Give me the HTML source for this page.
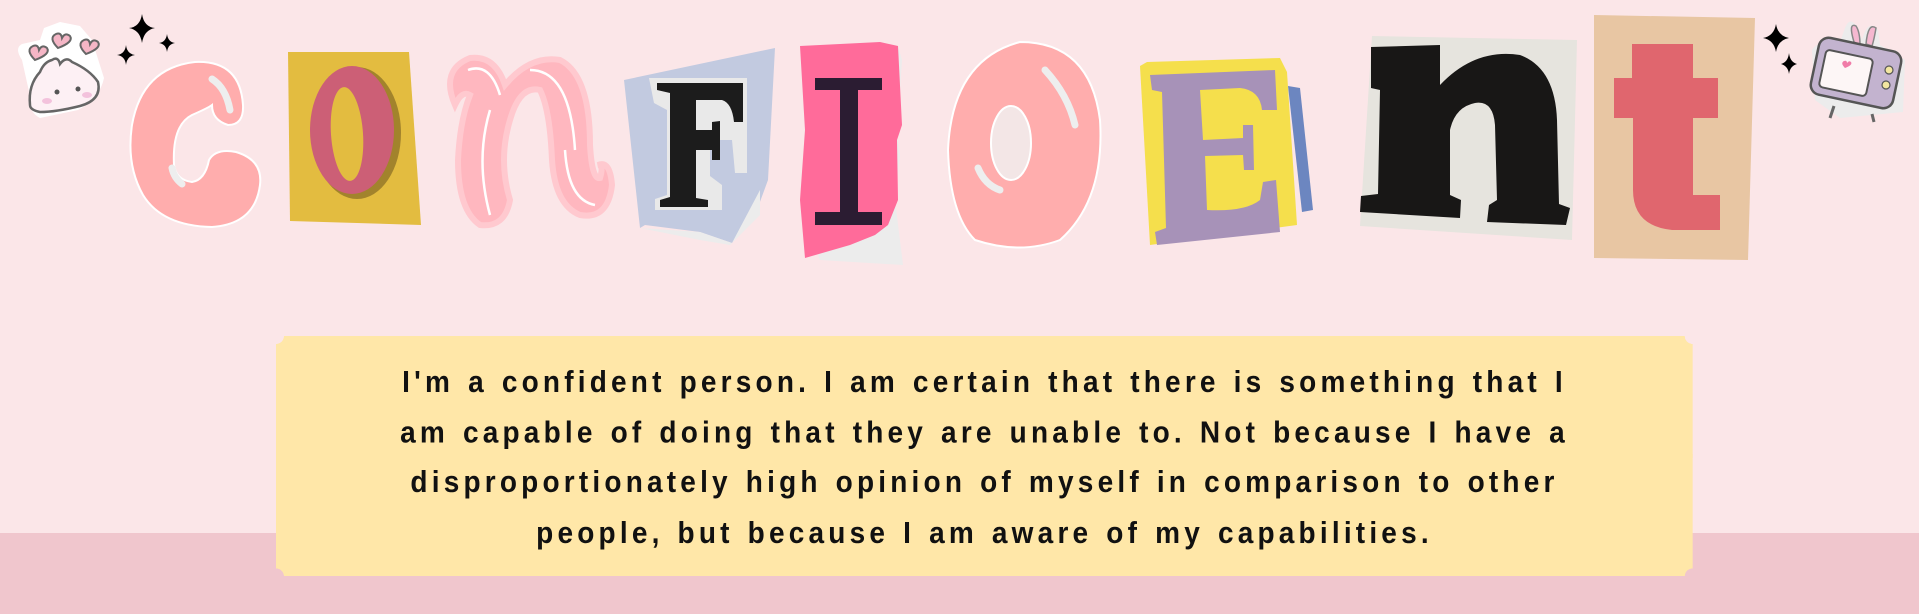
<!DOCTYPE html>
<html><head><meta charset="utf-8"><style>
html,body{margin:0;padding:0}
body{width:1919px;height:614px;background:#fbe6e8;position:relative;overflow:hidden;font-family:"Liberation Sans",sans-serif}
.band{position:absolute;left:0;top:533px;width:1919px;height:81px;background:#f0c6cd}
.box{position:absolute;left:276px;top:336px;width:1417px;height:240px;background:#ffe7a8;
-webkit-mask:radial-gradient(circle 8px at 0 0,transparent 98%,#000) top left/51% 51% no-repeat,radial-gradient(circle 8px at 100% 0,transparent 98%,#000) top right/51% 51% no-repeat,radial-gradient(circle 8px at 0 100%,transparent 98%,#000) bottom left/51% 51% no-repeat,radial-gradient(circle 8px at 100% 100%,transparent 98%,#000) bottom right/51% 51% no-repeat}
.txt{position:absolute;left:276px;top:366px;width:1417px;text-align:center;font-size:28px;line-height:45.5px;color:#111;letter-spacing:4.2px;word-spacing:2px;font-family:"Liberation Sans Narrow","Liberation Sans",sans-serif;font-weight:bold;transform:scaleY(1.1)}
svg{position:absolute;left:0;top:0}
</style></head><body>
<div class="band"></div>
<div class="box"></div>
<div class="txt">I'm a confident person. I am certain that there is something that I<br>am capable of doing that they are unable to. Not because I have a<br>disproportionately high opinion of myself in comparison to other<br>people, but because I am aware of my capabilities.</div>
<svg width="1919" height="300" viewBox="0 0 1919 300">
<g>
<path d="M22 60 Q14 48 22 44 L40 40 L44 28 L60 22 L80 26 L92 40 L104 78 Q100 98 78 110 L40 118 Q28 112 30 96 Z" fill="#fff"/>
<path d="M30 105 Q28 85 40 72 Q44 62 52 60 Q58 56 60 64 Q66 56 72 62 Q90 70 98 82 Q102 100 80 106 Q56 112 40 112 Q30 110 30 105Z" fill="#fdf0f4" stroke="#666" stroke-width="2.5"/>
<circle cx="57" cy="92" r="2.5" fill="#555"/><circle cx="78" cy="89" r="2.5" fill="#555"/>
<ellipse cx="47" cy="101" rx="5" ry="3" fill="#f3c2dc"/><ellipse cx="87" cy="95" rx="5" ry="3" fill="#f3c2dc"/>
<path d="M35 60 q-10 -10 -2 -14 q5 -2 6 4 q3 -6 8 -2 q4 6 -12 12z" fill="#f5b6c6" stroke="#666" stroke-width="2"/>
<path d="M58 48 q-10 -10 -2 -14 q5 -2 6 4 q3 -6 8 -2 q4 6 -12 12z" fill="#f5b6c6" stroke="#666" stroke-width="2"/>
<path d="M86 54 q-10 -10 -2 -14 q5 -2 6 4 q3 -6 8 -2 q4 6 -12 12z" fill="#f5b6c6" stroke="#666" stroke-width="2"/>
</g>
<g fill="#000">
<path d="M142 14 Q144 27 155 28 Q144 30 142 43 Q140 30 129 28 Q140 27 142 14Z"/>
<path d="M167 34 Q168 42 175 43 Q168 44 167 52 Q166 44 159 43 Q166 42 167 34Z"/>
<path d="M126 45 Q127 54 135 55 Q127 56 126 65 Q125 56 117 55 Q125 54 126 45Z"/>
<path d="M1776 24 Q1778 36 1789 38 Q1778 40 1776 52 Q1774 40 1763 38 Q1774 36 1776 24Z"/>
<path d="M1789 53 Q1790 62 1797 64 Q1790 66 1789 74 Q1788 66 1781 64 Q1788 62 1789 53Z"/>
</g>
<path d="M195 62 Q240 60 243 105 Q244 125 228 125 Q212 120 212 105 Q208 108 192 115 Q172 125 174 165 Q176 180 192 182 Q205 180 209 160 Q216 148 236 152 Q263 160 260 185 Q255 224 212 227 Q162 226 143 195 Q126 165 132 125 Q142 68 195 62Z" fill="#ffadad" stroke="#fff" stroke-width="2"/>
<path d="M212 79 Q226 88 230 110" stroke="#eee" stroke-width="7" fill="none" stroke-linecap="round"/>
<path d="M172 168 Q174 178 182 184" stroke="#eee" stroke-width="7" fill="none" stroke-linecap="round"/>
<polygon points="288,52 409,52 421,225 290,221" fill="#e3bc40"/>
<ellipse cx="357" cy="133" rx="44" ry="66" fill="#a2832c"/>
<ellipse cx="352" cy="130" rx="42" ry="64" fill="#cc5f76"/>
<ellipse cx="347" cy="134" rx="16" ry="47" fill="#e3bc40" transform="rotate(-4 347 134)"/>
<path d="M455 105 Q440 70 470 58 Q495 55 505 85 Q530 55 560 60 Q590 75 590 145 Q592 180 600 178 Q604 165 598 165 Q610 160 612 185 Q608 220 580 215 Q555 205 552 160 Q550 110 540 90 Q520 85 510 120 Q498 160 510 200 Q505 228 480 225 Q458 210 458 160 Q460 120 470 95 Q462 90 455 105Z" fill="#ffb7bf" stroke="#ffc9cf" stroke-width="6"/>
<path d="M468 70 Q490 62 500 95 M530 70 Q570 70 575 150 M490 110 Q475 160 490 215 M565 150 Q568 200 595 205" stroke="#fff" stroke-width="2.5" fill="none"/>
<polygon points="624,80 775,48 768,180 757,210 732,243 700,232 645,225 640,228" fill="#c2cae0"/>
<polygon points="640,228 700,232 732,243 760,190 760,215 730,245 700,240" fill="#ececec"/>
<path d="M649 78 H747 V173 H735 L732 140 H710 V176 L722 185 V210 H655 V199 L667 195 V110 L654 103Z" fill="#e9e9e9"/>
<path d="M657 83 H743 V122 H734 Q732 103 722 100 H696 V130 H712 V122 L720 121 V160 H712 V150 H696 V198 L708 200 V207 H660 V200 L670 197 V93 L657 90Z" fill="#1c1c1c"/>
<polygon points="800,46 880,42 898,46 902,60 897,135 900,155 895,200 903,265 820,260 800,200 805,130" fill="#ececec"/>
<polygon points="800,46 880,42 898,46 902,125 897,140 898,200 888,225 875,235 850,245 805,258 800,200 805,130" fill="#ff6b9a"/>
<path d="M815 78 H882 V90 H858 V212 H882 V225 H815 V212 H840 V90 H815Z" fill="#2b1c32"/>
<path d="M1020 42 Q1090 42 1100 120 Q1105 200 1060 240 Q1020 255 975 240 Q950 215 948 150 Q952 60 1020 42Z" fill="#ffadad" stroke="#fff" stroke-width="2"/>
<ellipse cx="1011" cy="143" rx="20" ry="37" fill="#f3e6e6" stroke="#fff" stroke-width="2"/>
<path d="M1045 70 Q1068 95 1075 125" stroke="#eee" stroke-width="7" fill="none" stroke-linecap="round"/>
<path d="M978 168 Q985 185 1000 190" stroke="#eee" stroke-width="7" fill="none" stroke-linecap="round"/>
<polygon points="1288,86 1300,88 1313,210 1302,212" fill="#6c86c0"/>
<polygon points="1147,62 1280,58 1287,72 1297,225 1150,245 1140,66" fill="#f5df4c"/>
<path d="M1150 75 L1275 70 L1277 110 L1262 110 Q1260 90 1240 88 L1200 90 L1203 140 L1243 138 L1243 125 L1253 125 L1254 170 L1244 170 L1243 155 L1205 156 L1207 210 Q1245 212 1260 200 L1263 182 L1276 180 L1280 232 L1157 245 L1155 232 L1166 228 L1162 92 L1152 90Z" fill="#a792b8"/>
<polygon points="1372,36 1577,40 1572,240 1360,226" fill="#e6e4de"/>
<path d="M1371 47 L1440 45 L1440 85 Q1475 48 1520 55 Q1555 68 1557 120 L1559 204 L1570 208 L1566 225 L1487 222 L1489 205 L1497 200 L1495 125 Q1493 100 1475 103 Q1455 107 1450 130 L1450 195 L1461 200 L1460 218 L1360 212 L1361 196 L1378 194 L1380 90 L1371 88Z" fill="#181716"/>
<polygon points="1594,15 1755,18 1748,260 1594,258" fill="#e8c6a3"/>
<path d="M1632 44 H1693 V78 H1718 V118 H1693 V195 H1720 V230 H1672 Q1633 226 1633 190 V118 H1614 V78 H1632Z" fill="#e0666e"/>
<g>
<path d="M1812 50 Q1818 40 1840 42 L1845 28 Q1850 15 1858 28 L1862 40 Q1868 18 1878 30 L1880 45 L1905 60 L1903 112 L1840 118 L1815 100Z" fill="#ececec"/>
<path d="M1854 42 Q1848 22 1856 26 Q1860 32 1860 45Z M1866 44 Q1868 22 1876 28 Q1874 40 1872 46Z" fill="#f5b8d0" stroke="#888" stroke-width="1.5"/>
<rect x="1814" y="44" width="84" height="58" rx="10" fill="#c3b3cf" stroke="#555" stroke-width="2.5" transform="rotate(12 1856 73)"/>
<rect x="1822" y="54" width="48" height="38" rx="4" fill="#fdf6f6" stroke="#555" stroke-width="2" transform="rotate(12 1846 73)"/>
<path d="M1845 68 q-5 -5 -1 -7 q3 -1 3 2 q2 -3 4 -1 q2 3 -6 6z" fill="#f07ca8"/>
<circle cx="1889" cy="70" r="4" fill="#f3e6a0" stroke="#555" stroke-width="1.2"/>
<circle cx="1886" cy="85" r="4" fill="#f3e6a0" stroke="#555" stroke-width="1.2"/>
<path d="M1834 106 L1830 118 M1872 114 L1874 122" stroke="#666" stroke-width="3"/>
</g>
</svg>
</body></html>
